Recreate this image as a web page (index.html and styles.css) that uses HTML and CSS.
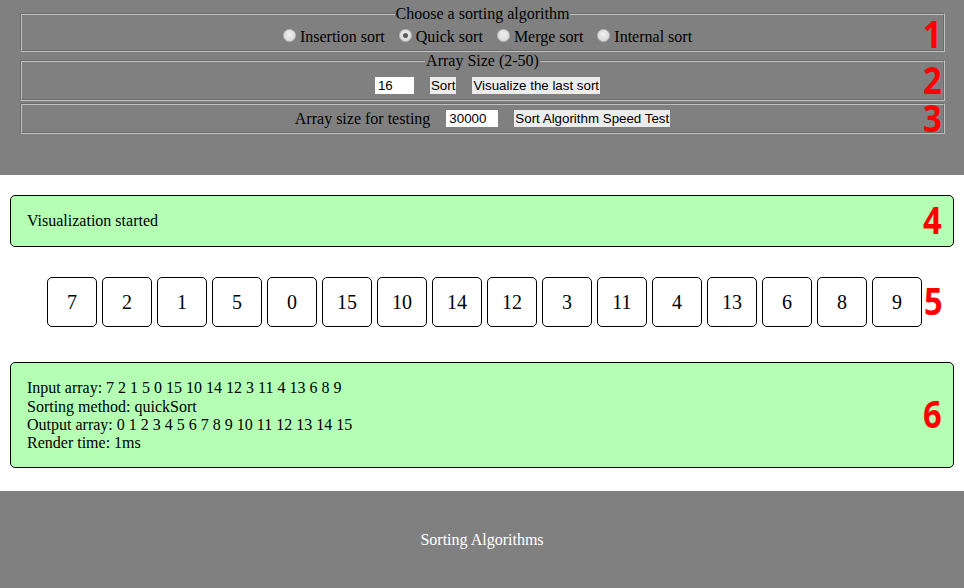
FILE: index.html
```html
<!DOCTYPE html>
<html lang="en">
<head>
<meta charset="utf-8">
<title>Sorting Algorithms</title>
<link rel="stylesheet" href="styles.css">
</head>
<body>
<header class="controls">
  <fieldset class="group">
    <legend class="group-title">Choose a sorting algorithm</legend>
    <div class="row row-shift">
      <label class="choice"><input type="radio" name="algo" class="radio"> Insertion sort</label>
      <label class="choice"><input type="radio" name="algo" class="radio" checked> Quick sort</label>
      <label class="choice"><input type="radio" name="algo" class="radio"> Merge sort</label>
      <label class="choice"><input type="radio" name="algo" class="radio"> Internal sort</label>
      <span class="tag tag-field tag-one">1</span>
    </div>
  </fieldset>
  <fieldset class="group">
    <legend class="group-title">Array Size (2-50)</legend>
    <div class="row row-tall row-shift">
      <input class="field field-small" type="text" value="16">
      <button class="btn" type="button">Sort</button>
      <button class="btn" type="button">Visualize the last sort</button>
      <span class="tag tag-field tag-two">2</span>
    </div>
  </fieldset>
  <fieldset class="group group-plain">
    <div class="row">
      <span class="caption">Array size for testing</span>
      <input class="field field-wide" type="text" value="30000">
      <button class="btn" type="button">Sort Algorithm Speed Test</button>
      <span class="tag tag-field">3</span>
    </div>
  </fieldset>
</header>

<main class="content">
  <section class="panel panel-status">
    <p class="line">Visualization started</p>
    <span class="tag tag-panel">4</span>
  </section>

  <section class="cells">
    <div class="cell">7</div>
    <div class="cell">2</div>
    <div class="cell">1</div>
    <div class="cell">5</div>
    <div class="cell">0</div>
    <div class="cell">15</div>
    <div class="cell">10</div>
    <div class="cell">14</div>
    <div class="cell">12</div>
    <div class="cell">3</div>
    <div class="cell">11</div>
    <div class="cell">4</div>
    <div class="cell">13</div>
    <div class="cell">6</div>
    <div class="cell">8</div>
    <div class="cell">9</div>
    <span class="tag tag-cells">5</span>
  </section>

  <section class="panel panel-result">
    <p class="line">Input array: 7 2 1 5 0 15 10 14 12 3 11 4 13 6 8 9</p>
    <p class="line">Sorting method: quickSort</p>
    <p class="line">Output array: 0 1 2 3 4 5 6 7 8 9 10 11 12 13 14 15</p>
    <p class="line">Render time: 1ms</p>
    <span class="tag tag-panel">6</span>
  </section>
</main>

<footer class="footer">Sorting Algorithms</footer>
</body>
</html>
```

FILE: styles.css
```css
* { box-sizing: border-box; }

html, body {
  margin: 0;
  padding: 0;
}

body {
  font-family: "Liberation Serif", "Times New Roman", serif;
  font-size: 16px;
  color: #000;
  background: #fff;
}

/* ---------- header / controls ---------- */
.controls {
  background: #808080;
  padding: 5px 19px 41px 20px;
}

.group {
  margin: 0;
  padding: 0;
  border: 2px groove #c0c0c0;
  min-width: 0;
}

.group-plain {
  margin-top: 2px;
}

.group-title {
  margin: 0 auto;
  padding: 0 1px;
  line-height: 18px;
}

.row {
  position: relative;
  display: flex;
  align-items: center;
  justify-content: center;
  gap: 16px;
  height: 27px;
}

.row-tall {
  height: 29px;
  padding-top: 1px;
}

.row-shift {
  padding-left: 10px;
}

.row-shift .choice + .choice {
  margin-left: -2px;
}

.choice {
  display: inline-flex;
  align-items: center;
  gap: 4px;
}

.radio {
  appearance: none;
  -webkit-appearance: none;
  width: 13px;
  height: 13px;
  margin: 0 0 2px 0;
  border-radius: 50%;
  border: 1px solid #bdbdbd;
  background: radial-gradient(circle at 50% 40%, #f0f0f0 0%, #dedede 60%, #cfcfcf 100%);
  position: relative;
}

.radio:checked::after {
  content: "";
  position: absolute;
  left: 3px;
  top: 3px;
  width: 5px;
  height: 5px;
  border-radius: 50%;
  background: #5a5a5a;
}

.caption {
  line-height: 18px;
}

.field {
  font-family: "Liberation Sans", Arial, sans-serif;
  font-size: 13.33px;
  height: 17px;
  padding: 0 2px;
  border: 1px solid #fff;
  background: #fff;
  color: #000;
  outline: none;
}

.field-small { width: 39px; }
.field-wide { width: 52px; }

.btn {
  font-family: "Liberation Sans", Arial, sans-serif;
  font-size: 13.33px;
  height: 17px;
  line-height: 15px;
  padding: 0 1px;
  border: 0;
  background: #ececec;
  color: #000;
}

/* ---------- annotation tags ---------- */
.tag {
  position: absolute;
  top: 50%;
  transform: translateY(calc(-50% - 2px)) scaleX(0.86);
  transform-origin: right center;
  font-family: "Open Sans", "DejaVu Sans", sans-serif;
  font-weight: 700;
  font-size: 38px;
  line-height: 0.75;
  color: #ff0000;
}

.tag-one { margin-top: -2px; }
.tag-two { margin-top: -4px; }

.tag-field { right: 1px; }
.tag-panel { right: 11px; }
.tag-cells { right: 21px; }

/* ---------- main content ---------- */
.content {
  padding-top: 20px;
  padding-bottom: 23px;
}

.panel {
  position: relative;
  margin: 0 10px;
  padding: 16px;
  background: #b4ffb4;
  border: 1px solid #000;
  border-radius: 5px;
}

.panel-result {
  padding-bottom: 15px;
}

.line {
  margin: 0;
  line-height: 18.4px;
}

.panel-result .line {
  line-height: 18.2px;
}

.cells {
  position: relative;
  display: flex;
  justify-content: center;
  gap: 5px;
  padding-left: 5px;
  margin: 30px 0 35px;
}

.cell {
  width: 50px;
  height: 50px;
  border: 1px solid #000;
  border-radius: 5px;
  background: #fff;
  display: flex;
  align-items: center;
  justify-content: center;
  font-size: 20px;
}

/* ---------- footer ---------- */
.footer {
  background: #808080;
  color: #fff;
  text-align: center;
  padding: 40px 0 60px;
  line-height: 18px;
}
```
